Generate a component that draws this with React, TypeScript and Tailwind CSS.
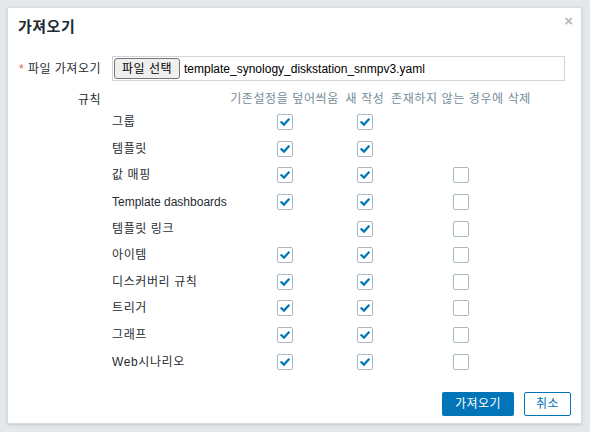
import React from "react";

const font = { fontFamily: '"Liberation Sans", Arial, "Noto Sans CJK KR", sans-serif' };

function Check({ on }: { on: boolean }) {
  return (
    <span className="inline-flex h-4 w-4 items-center justify-center rounded-[2px] border border-[#a9b9c3] bg-white">
      {on && (
        <svg width="12" height="12" viewBox="0 0 12 12">
          <path d="M2.5 6.2 L5 8.6 L9.6 3.6" fill="none" stroke="#0275b8" strokeWidth="2.2" strokeLinecap="square" />
        </svg>
      )}
    </span>
  );
}

const rows: [string, boolean | null, boolean | null, boolean | null, boolean][] = [
  ["그룹", true, true, null, true],
  ["템플릿", true, true, null, true],
  ["값 매핑", true, true, false, true],
  ["Template dashboards", true, true, false, false],
  ["템플릿 링크", null, true, false, true],
  ["아이템", true, true, false, true],
  ["디스커버리 규칙", true, true, false, true],
  ["트리거", true, true, false, true],
  ["그래프", true, true, false, true],
  ["Web시나리오", true, true, false, true],
];

export default function App() {
  return (
    <div className="h-[432px] w-[590px] bg-[#e5e8eb] p-[7px]" style={font}>
      <div className="relative h-[417px] w-[575px] border border-[#d5dbdf] bg-white text-[12px] text-[#1f2c33] shadow-sm">
        <button className="absolute right-[8px] top-[5px] text-[15px] font-bold leading-none text-[#b4bcc1]">×</button>
        <div className="px-[10px] pt-[10px] text-[15px] font-bold leading-[18px] tracking-[0.5px]">가져오기</div>
        <div className="mt-[20px] flex items-center px-[10px]">
          <div className="w-[83px] whitespace-nowrap text-right tracking-[0.5px]">
            <span className="text-[#e45959]">*</span> 파일 가져오기
          </div>
          <div className="ml-[11px] flex h-[25px] w-[453px] items-center border border-[#cfd6db] px-[1px]">
            <span className="flex h-[21px] items-center rounded-[3px] border border-[#767676] bg-[#efefef] px-[7px] text-[12px] tracking-[0.5px] text-black">
              파일 선택
            </span>
            <span className="ml-[4px] text-[12px] text-black">template_synology_diskstation_snmpv3.yaml</span>
          </div>
        </div>
        <div className="mt-[9px] flex px-[10px]">
          <div className="w-[83px] pt-[3px] text-right leading-[14px] tracking-[0.5px]">규칙</div>
          <div className="ml-[11px]">
            <div className="grid grid-cols-[114px_117px_44px_148px] items-center">
              <div />
              <div className="h-[19px] whitespace-nowrap text-center leading-[19px] tracking-[0.6px] text-[#768d99]">기존설정을 덮어씌움</div>
              <div className="h-[19px] whitespace-nowrap text-center leading-[19px] tracking-[0.6px] text-[#768d99]">새 작성</div>
              <div className="h-[19px] whitespace-nowrap text-center leading-[19px] tracking-[0.6px] text-[#768d99]">존재하지 않는 경우에 삭제</div>
              {rows.map(([label, a, b, c, ko]) => (
                <React.Fragment key={label}>
                  <div className={ko ? "flex h-[26.6px] items-center whitespace-nowrap tracking-[0.6px]" : "flex h-[26.6px] items-center whitespace-nowrap"}>{label}</div>
                  <div className="flex h-[26.6px] items-center justify-center">{a !== null && <Check on={a} />}</div>
                  <div className="flex h-[26.6px] items-center justify-center">{b !== null && <Check on={b} />}</div>
                  <div className="flex h-[26.6px] items-center justify-center">{c !== null && <Check on={c} />}</div>
                </React.Fragment>
              ))}
            </div>
          </div>
        </div>
        <div className="absolute bottom-[7px] right-[10px] flex gap-[10px]">
          <button className="h-[24px] w-[72px] rounded-[2px] bg-[#0275b8] text-[12px] tracking-[0.5px] text-white">가져오기</button>
          <button className="h-[24px] w-[47px] rounded-[2px] border border-[#0275b8] bg-white text-[12px] tracking-[0.5px] text-[#0275b8]">취소</button>
        </div>
      </div>
    </div>
  );
}
